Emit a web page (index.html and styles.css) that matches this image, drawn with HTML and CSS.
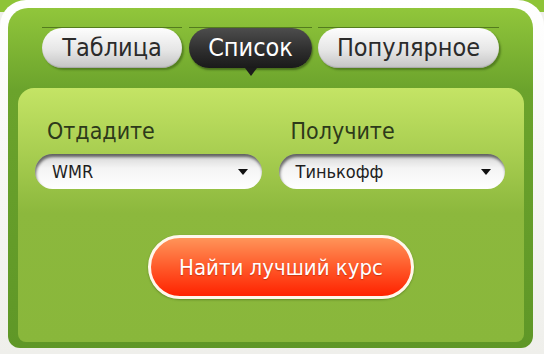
FILE: index.html
```html
<!DOCTYPE html>
<html lang="ru">
<head>
    <meta charset="utf-8">
    <title>Обмен</title>
    <link rel="stylesheet" href="styles.css">
</head>
<body>
    <div class="frame">
        <div class="box">
            <ul class="tabs">
                <li class="tab tab-table"><span>Таблица</span></li>
                <li class="tab tab-list active"><span>Список</span></li>
                <li class="tab tab-pop"><span>Популярное</span></li>
            </ul>
            <div class="panel">
                <div class="fields">
                    <div class="field">
                        <label>Отдадите</label>
                        <div class="select"><span>WMR</span><i class="caret"></i></div>
                    </div>
                    <div class="field">
                        <label>Получите</label>
                        <div class="select"><span>Тинькофф</span><i class="caret"></i></div>
                    </div>
                </div>
                <button class="find">Найти лучший курс</button>
            </div>
        </div>
    </div>
</body>
</html>
```

FILE: styles.css
```css
body {
    margin: 0;
    width: 544px;
    height: 354px;
    overflow: hidden;
    background: linear-gradient(#8ec437 0, #8ec437 12px, #efefeb 12px);
    font-family: "DejaVu Sans Condensed", "DejaVu Sans", sans-serif;
}
.frame {
    height: 354px;
    box-sizing: border-box;
    padding: 8px 11px 0 8px;
    border-radius: 26px 26px 0 0;
    background: linear-gradient(#ffffff, #f6f6f3 200px, #efefeb);
}
.box {
    height: 340px;
    box-sizing: border-box;
    padding: 19px 9px 7px 10px;
    border-radius: 20px 20px 12px 12px;
    background: linear-gradient(#91c63b, #6ba32c 82px, #5f9727 100%);
}
.tabs {
    display: flex;
    margin: 0 0 20px 24px;
    padding: 0;
    list-style: none;
}
.tab {
    position: relative;
    border-top: 1px solid rgba(40, 70, 10, 0.55);
}
.tab span {
    display: block;
    height: 40px;
    line-height: 40px;
    text-align: center;
    font-size: 25px;
    color: #2b2b2b;
    border-radius: 20px;
    background: linear-gradient(#fdfdfd, #e6e6e6 55%, #c4c4c4);
    box-shadow: 2px 2px 2px rgba(40, 70, 10, 0.45), inset 0 -1px 1px rgba(0, 0, 0, 0.15);
}
.tab-table { width: 140px; }
.tab-list { width: 123px; margin-left: 7px; }
.tab-pop { width: 181px; margin-left: 6px; }
.tab.active span {
    color: #fff;
    background: linear-gradient(#4d4d4d, #2c2c2c 60%, #1a1a1a);
    box-shadow: 1px 2px 2px rgba(30, 50, 10, 0.5);
}
.tab.active::after {
    content: "";
    position: absolute;
    left: 50%;
    top: 40px;
    margin-left: -6px;
    border-left: 6px solid transparent;
    border-right: 6px solid transparent;
    border-top: 8px solid #1c1c1c;
}
.panel {
    height: 254px;
    box-sizing: border-box;
    padding: 28px 19px 0 17px;
    border-radius: 16px 16px 8px 8px;
    background: linear-gradient(#c4e465, #a6cc4f 70px, #8cb83d 125px, #89b73b);
}
.fields {
    display: flex;
    gap: 17px;
}
.field {
    flex: 1;
}
.field label {
    display: block;
    padding-left: 12px;
    font-size: 23px;
    line-height: 30px;
    color: #2d3a1a;
}
.select {
    position: relative;
    height: 35px;
    margin-top: 8px;
    padding-left: 17px;
    box-sizing: border-box;
    border-radius: 18px;
    background: linear-gradient(#d4d4d4, #f4f4f4 40%, #ffffff);
    box-shadow: inset 1px 3px 3px rgba(0, 0, 0, 0.55);
    font-size: 18px;
    line-height: 36px;
    color: #1e1e1e;
}
.caret {
    position: absolute;
    right: 14px;
    top: 15px;
    border-left: 5px solid transparent;
    border-right: 5px solid transparent;
    border-top: 6px solid #111;
}
.find {
    display: block;
    width: 266px;
    height: 64px;
    margin: 46px 0 0 113px;
    border: 3px solid #fff7ec;
    border-radius: 32px;
    background: linear-gradient(#ff9459, #ff5a2a 50%, #ff2200);
    box-shadow: 0 1px 2px rgba(60, 90, 20, 0.5);
    font-family: inherit;
    font-size: 22px;
    color: #fff;
    text-shadow: 0 1px 1px rgba(150, 30, 0, 0.5);
}
```
